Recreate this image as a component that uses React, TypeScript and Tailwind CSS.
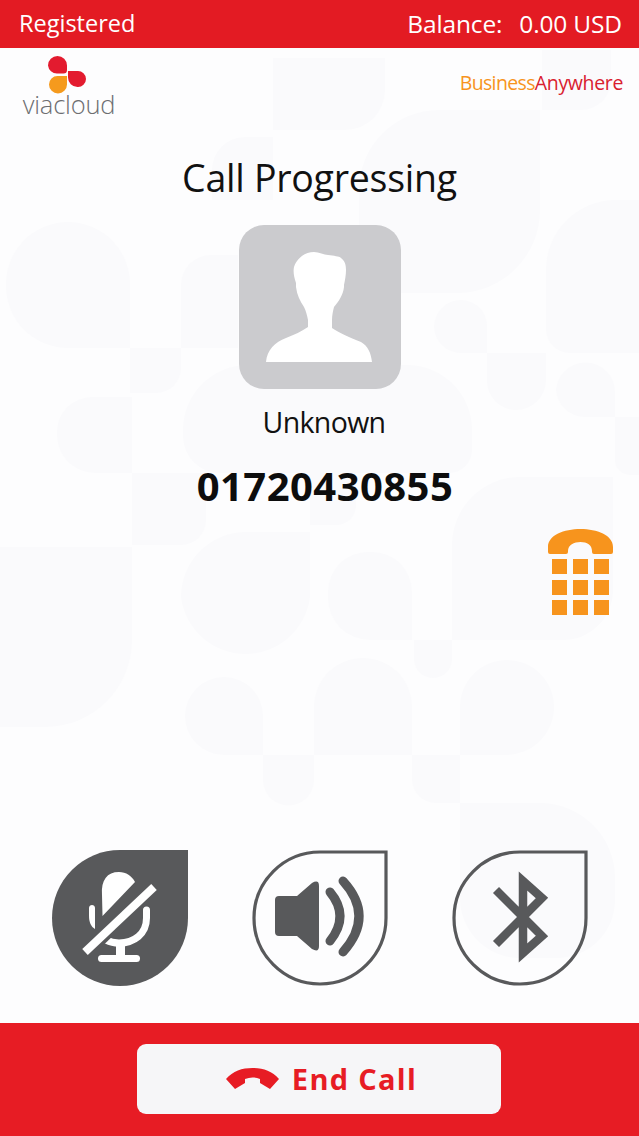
const F = { fontFamily: '"Open Sans", "Noto Sans", sans-serif' };

const BG = "#fafafc";

function Background() {
  return (
    <svg className="absolute inset-0 w-full h-full" viewBox="0 48 639 975" aria-hidden="true">
      <g fill={BG}>
        <path d="M273 58H385V90A40 40 0 0 1 345 130H273Z" />
        <path d="M542 50H611V80A30 30 0 0 1 581 110H542Z" />
        <path d="M359 293V190A80 80 0 0 1 439 110H540V210A83 83 0 0 1 457 293Z" />
        <path d="M212 170A33 33 0 0 1 245 137H273V200H212Z" />
        <path d="M546 270A70 70 0 0 1 616 200H639V353H570A24 24 0 0 1 546 329Z" />
        <path d="M434 327A27 27 0 0 1 461 300A26 26 0 0 1 487 326V353H461A27 27 0 0 1 434 327Z" />
        <path d="M487 353H546V380A30 30 0 0 1 516 410A29 29 0 0 1 487 381Z" />
        <path d="M556 392A29 29 0 0 1 615 392V417H585A29 29 0 0 1 556 388Z" />
        <path d="M615 417H639V475H630A15 15 0 0 1 615 460Z" />
        <path d="M6 284A62 62 0 0 1 130 284V348H68A62 62 0 0 1 6 286Z" />
        <path d="M130 348H181V368A25 25 0 0 1 156 393H130Z" />
        <path d="M181 285A30 30 0 0 1 211 255H238V348H181Z" />
        <path d="M57 432A35 35 0 0 1 92 397H132V473H95A38 38 0 0 1 57 435Z" />
        <path d="M132 473H206V520A25 25 0 0 1 181 545H132Z" />
        <path d="M183 430A65 65 0 0 1 248 365H407A65 65 0 0 1 472 430V450A23 23 0 0 1 449 473H220A37 37 0 0 1 183 436Z" />
        <path d="M310 473H356V505A20 20 0 0 1 336 525H310Z" />
        <path d="M452 545A68 68 0 0 1 520 477H613V590A50 50 0 0 1 563 640H452Z" />
        <path d="M0 547H132V640A87 87 0 0 1 45 727H0Z" />
        <path d="M181 597A65 65 0 0 1 246 532H310V597A65 65 0 0 1 181 597Z" />
        <path d="M328 592A40 40 0 0 1 368 552H372A40 40 0 0 1 412 592V640H370A42 42 0 0 1 328 598Z" />
        <path d="M414 640H452V659A19 19 0 0 1 414 659Z" />
        <path d="M185 716A39 39 0 0 1 263 716V755H224A39 39 0 0 1 185 716Z" />
        <path d="M263 755H314V780A25 25 0 0 1 263 780Z" />
        <path d="M314 707A49 49 0 0 1 412 707V755H314Z" />
        <path d="M412 755H460V803H436A24 24 0 0 1 412 779Z" />
        <path d="M460 707A47 47 0 0 1 554 707A48 48 0 0 1 506 755H460Z" />
        <path d="M460 803H540A75 75 0 0 1 615 878V900A58 58 0 0 1 557 958H520A60 60 0 0 1 460 898Z" />
      </g>
    </svg>
  );
}

function Logo() {
  return (
    <div className="flex flex-col items-center w-[92px]">
      <svg width="39" height="38" viewBox="0 0 39 38" className="-ml-[3px] -mb-[3px]">
        <path d="M0 9.500A9.500 9.500 0 0 1 19 9.500V14A3.500 3.500 0 0 1 15.500 17.500H9A9 9 0 0 1 0 9.500Z" fill="#e31b2f" />
        <path d="M20 15H29.500A8 8 0 0 1 38 23A8 8 0 0 1 29.500 31A9.500 9.500 0 0 1 20 21.500Z" fill="#e31b2f" />
        <path d="M1 28.500A8.500 8.500 0 0 1 9.500 20H19V28.500A9 9 0 0 1 1 28.500Z" fill="#f59a1d" />
      </svg>
      <span className="text-[25.5px] leading-[26px] font-light text-[#6d6e71] tracking-[-0.2px]" style={F}>viacloud</span>
    </div>
  );
}

function Keypad() {
  const cells = Array.from({ length: 9 });
  return (
    <div className="flex flex-col items-center w-[65px] gap-[5px]">
      <svg width="65" height="25" viewBox="0 0 65 25">
        <path d="M0 23V18C0 6 16 0 32.500 0S65 6 65 18V23Q65 25 63 25H46Q44 25 44 23V22C44 16 39 13 32.500 13S20 16 20 22V23Q20 25 18 25H2Q0 25 0 23Z" fill="#f7941d" />
      </svg>
      <div className="grid grid-cols-3 gap-x-[6px] gap-y-[5.5px]">
        {cells.map((_, i) => (
          <div key={i} className="w-[15px] h-[15px] bg-[#f7941d]" />
        ))}
      </div>
    </div>
  );
}

function Drop({ children, filled }: { children: React.ReactNode; filled?: boolean }) {
  return (
    <svg width="136" height="136" viewBox="0 0 136 136" className="shrink-0">
      {filled ? (
        <path d="M68 0H136V68A68 68 0 1 1 68 0z" fill="#58595b" />
      ) : (
        <path d="M68 2H134V68A66 66 0 1 1 68 2z" fill="none" stroke="#58595b" strokeWidth="3.2" />
      )}
      {children}
    </svg>
  );
}

function App() {
  return (
    <div className="w-[639px] h-[1136px] flex flex-col overflow-hidden bg-[#fdfdfe]" style={F}>
      <header className="h-[48px] shrink-0 bg-[#e31b23] flex items-center justify-between pl-[19px] pr-[17px] text-white">
        <span className="text-[23.5px]">Registered</span>
        <span className="flex gap-[17px] text-[24.5px] tracking-[-0.15px]">
          <span>Balance:</span>
          <span>0.00 USD</span>
        </span>
      </header>

      <main className="relative flex-1 flex flex-col items-center">
        <Background />
        <div className="relative w-full flex items-start justify-between pl-[23px] pr-[16px] pt-[8px] h-[105px]">
          <Logo />
          <div className="mt-[14px] text-[19.5px] leading-[26px]">
            <span className="text-[#f7941d] tracking-[-0.65px]">Business</span>
            <span className="text-[#d9202f] tracking-[-0.35px]">Anywhere</span>
          </div>
        </div>

        <h1 className="relative text-[37.5px] leading-[50px] text-[#111] tracking-[-0.25px]">Call Progressing</h1>

        <div className="relative mt-[22px] w-[162px] h-[164px] rounded-[25px] bg-[#cbcbce] flex items-center justify-center">
          <svg width="162" height="164" viewBox="0 0 162 164">
            <path
              d="M27 137C28 125 36 117 47 113C55 110 63 106 69 102V95C68 90 67 86 65 82C61 76 58 70 57 62L57 58C55 52 54 47 55 42C58 33 66 27 75 27C80 27 85 30 89 30C95 31 100 31 102 33C106 36 107 40 107 45C107 50 106 55 105 60L105 62C104 70 100 76 95 82C94 86 93 90 93 95V103C100 108 110 112 122 117C129 121 132 128 133 137Z"
              fill="#fff"
            />
          </svg>
        </div>

        <div className="relative mt-[13px] ml-[9px] text-[28.5px] leading-[40px] text-[#111] tracking-[-0.65px]">Unknown</div>
        <div className="relative mt-[20px] ml-[11px] text-[40px] leading-[48px] font-bold text-[#0d0d0d] tracking-[0.45px]">01720430855</div>

        <div className="relative w-full flex justify-end pr-[26px] mt-[19px]">
          <Keypad />
        </div>

        <div className="relative mt-auto mb-[37px] w-full flex pl-[52px] gap-[64px]">
          <Drop filled>
            <g fill="#fff">
              <path d="M50.500 66L50 45C49 30 55 22 67 22C74 22 80 26 83 32Z" />
              <path d="M37 58C37 54 43 54 43 58V79C39 77 37 72 37 66Z" />
              <rect x="64" y="94" width="9" height="13" />
              <rect x="46" y="105" width="42" height="7" rx="3.500" />
            </g>
            <path d="M94.500 60V68C94.500 84 82 93 67 93C62 93 58 92 54 90" fill="none" stroke="#fff" strokeWidth="7" strokeLinecap="round" />
            <path d="M33 102L102 37" stroke="#58595b" strokeWidth="15" />
            <path d="M33 102L102 37" stroke="#fff" strokeWidth="8" />
          </Drop>
          <Drop>
            <path
              d="M23 50Q23 46 27 46H45L60 33Q67 29 67 36V96Q67 103 60 99L45 86H27Q23 86 23 82Z"
              fill="#58595b"
            />
            <g fill="none" stroke="#58595b" strokeWidth="9" strokeLinecap="round">
              <path d="M78 42Q98 66 78 91" />
              <path d="M91 31Q123 66 91 102" />
            </g>
          </Drop>
          <Drop>
            <path d="M44 40L90 86L71 103V31L90 48L44 94" fill="none" stroke="#58595b" strokeWidth="8.500" strokeLinejoin="miter" strokeMiterlimit="4" />
          </Drop>
        </div>
      </main>

      <footer className="h-[113px] shrink-0 bg-[#e71c24] flex items-center justify-center">
        <button className="w-[364px] h-[70px] mr-px pl-[5px] rounded-[9px] bg-[#f6f6f8] flex items-center justify-center gap-[13px] -mt-[2px]">
          <svg width="53" height="21" viewBox="0 0 53 21">
            <path d="M0 11C7 3 16 0 26.500 0S46 3 53 11L44 21 34 15V11C29 9 24 9 19 11V15L9 21Z" fill="#e71c24" />
          </svg>
          <span className="text-[29px] font-bold text-[#e71c24] tracking-[1.3px]">End Call</span>
        </button>
      </footer>
    </div>
  );
}

export default App;
